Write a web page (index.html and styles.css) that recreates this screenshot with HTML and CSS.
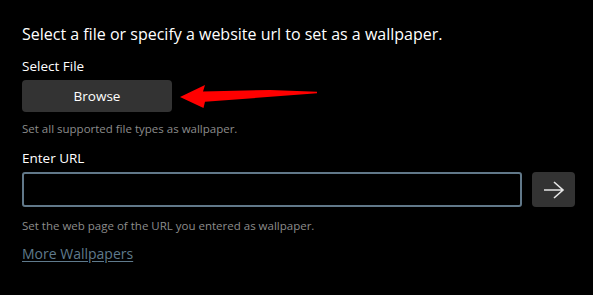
FILE: index.html
```html
<!DOCTYPE html>
<html lang="en">
<head>
<meta charset="utf-8">
<title>Wallpaper</title>
<link rel="stylesheet" href="styles.css">
</head>
<body>
<main class="panel">
  <h1 class="title">Select a file or specify a website url to set as a wallpaper.</h1>
  <label class="label label-file">Select File</label>
  <div class="browse-row">
    <button class="btn browse">Browse</button>
  </div>
  <p class="hint hint-file">Set all supported file types as wallpaper.</p>
  <label class="label label-url">Enter URL</label>
  <div class="url-row">
    <input class="url-input" type="text" aria-label="URL">
    <button class="btn go" aria-label="Go">
      <svg width="22" height="18" viewBox="0 0 22 18"><path d="M1 9H20M11 1L20 9L11 17" fill="none" stroke="#e6e6e6" stroke-width="1.6"/></svg>
    </button>
  </div>
  <p class="hint hint-url">Set the web page of the URL you entered as wallpaper.</p>
  <a class="more" href="#">More Wallpapers</a>
</main>
<svg class="annot" width="593" height="295" viewBox="0 0 593 295">
  <path d="M180 97 L205 85 L203 91.5 L270 90 L317 91.8 L317 93.3 L205 101.8 L203.5 108 Z" fill="#ff0000"/>
</svg>
</body>
</html>
```
FILE: styles.css
```css
html, body {
  margin: 0;
  padding: 0;
  background: #000;
  width: 593px;
  height: 295px;
  overflow: hidden;
}
body {
  position: relative;
  font-family: "Open Sans", "Noto Sans", sans-serif;
  color: #fff;
}
.panel {
  display: flex;
  flex-direction: column;
  align-items: flex-start;
  padding: 23px 0 0 22px;
}
.title {
  margin: 0;
  font-size: 16px;
  font-weight: 400;
  line-height: 22px;
}
.label {
  font-size: 13.5px;
  line-height: 20px;
  color: #fff;
}
.label-file { margin-top: 11px; }
.label-url { margin-top: 11px; }
.browse-row { margin-top: 4px; }
.btn {
  border: none;
  background: #333333;
  color: #fff;
  font-family: inherit;
  border-radius: 4px;
  cursor: pointer;
}
.browse {
  width: 150px;
  height: 32px;
  font-size: 13.5px;
  padding: 0;
}
.hint {
  margin: 9px 0 0;
  font-size: 11.5px;
  line-height: 16px;
  color: #8c8c8c;
}
.hint-url { margin-top: 11px; }
.url-row {
  margin-top: 4px;
  display: flex;
  gap: 10px;
}
.url-input {
  box-sizing: border-box;
  width: 500px;
  height: 35px;
  border: 2px solid #617889;
  border-radius: 3px;
  background: #000;
  color: #fff;
  outline: none;
}
.go {
  width: 43px;
  height: 35px;
  padding: 0;
  display: flex;
  align-items: center;
  justify-content: center;
}
.more {
  margin-top: 10px;
  font-size: 14px;
  line-height: 20px;
  color: #5f7a8c;
  text-decoration: underline;
  text-underline-offset: 2px;
}
.annot {
  position: absolute;
  left: 0;
  top: 0;
  pointer-events: none;
}
```
